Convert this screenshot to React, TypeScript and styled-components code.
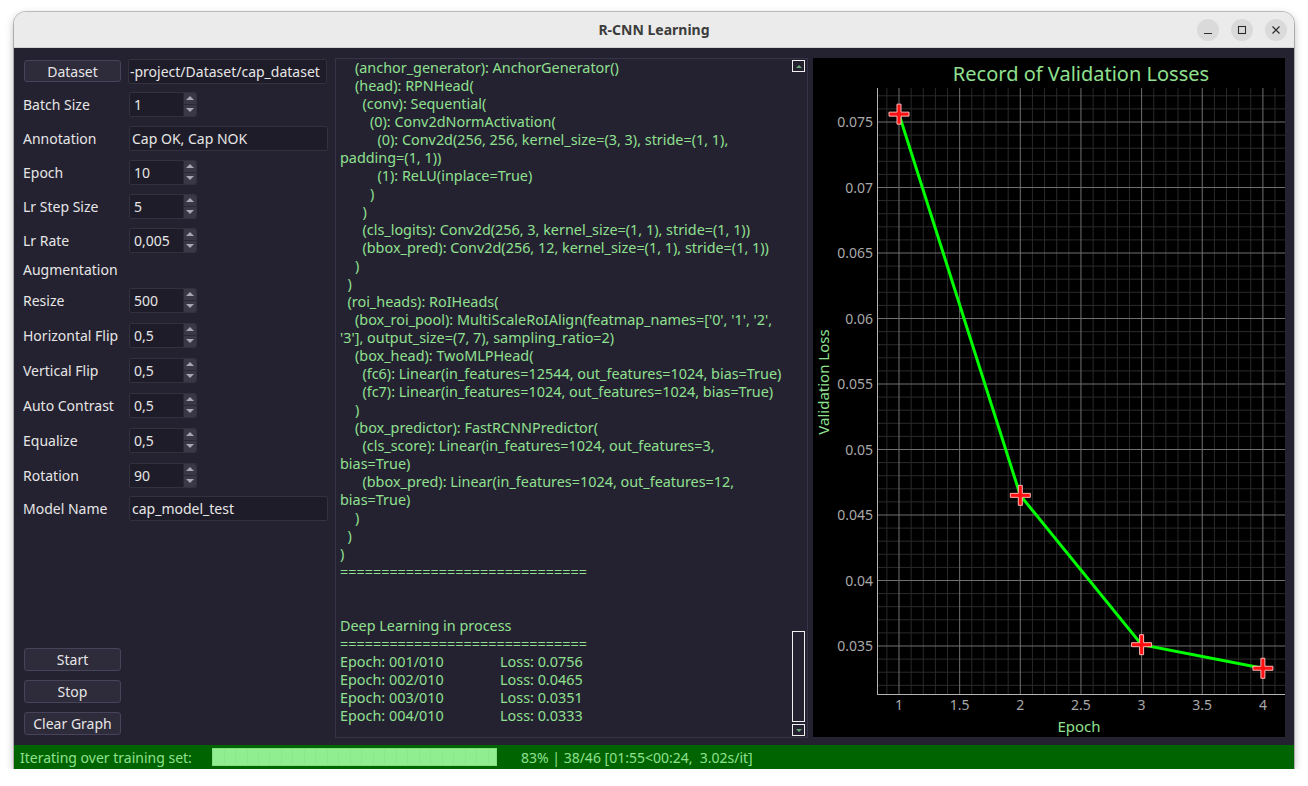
import styled, { createGlobalStyle } from "styled-components";

const GlobalStyle = createGlobalStyle`
  body {
    margin: 0;
    background: #ffffff;
    font-family: "Noto Sans", "DejaVu Sans", sans-serif;
  }
`;

const GREEN = "#90e090";

const Desktop = styled.div`
  padding: 12px 0 0 14px;
`;

const Window = styled.div`
  width: 1280px;
  height: 757px;
  display: flex;
  flex-direction: column;
  border-radius: 12px 12px 0 0;
  overflow: hidden;
  box-shadow: 0 0 0 1px rgba(0, 0, 0, 0.22), 0 3px 9px rgba(0, 0, 0, 0.3);
`;

const TitleBar = styled.div`
  height: 36px;
  flex: none;
  display: grid;
  grid-template-columns: 1fr auto 1fr;
  align-items: center;
  background: #ebebeb;
  border-bottom: 1px solid #d2d2d2;
  box-sizing: border-box;
`;

const Title = styled.div`
  grid-column: 2;
  font-size: 14px;
  font-weight: 700;
  color: #3c3c3c;
`;

const WinButtons = styled.div`
  justify-self: end;
  display: flex;
  gap: 12px;
  padding-right: 7px;
`;

const WinButton = styled.div`
  width: 22px;
  height: 22px;
  border-radius: 50%;
  background: #dadada;
  display: flex;
  align-items: center;
  justify-content: center;
  color: #2e2e2e;
`;

const Body = styled.div`
  flex: 1;
  display: flex;
  gap: 5px;
  padding: 10px 9px 7px 9px;
  background: #242130;
  min-height: 0;
`;

const LeftPanel = styled.div`
  width: 307px;
  flex: none;
  display: flex;
  flex-direction: column;
  justify-content: space-between;
  padding: 1px 0 3px 0;
  color: #e6e6e6;
  font-size: 14px;
`;

const Form = styled.div`
  display: flex;
  flex-direction: column;
`;

const FormGroup = styled.div<{ $gap: number }>`
  display: flex;
  flex-direction: column;
  gap: ${(p) => p.$gap}px;
`;

const Row = styled.div<{ $h?: number }>`
  display: flex;
  align-items: center;
  height: ${(p) => p.$h ?? 26}px;
`;

const Label = styled.span`
  width: 106px;
  flex: none;
  white-space: nowrap;
`;

const SectionLabel = styled.div`
  height: 18px;
  line-height: 18px;
  margin: 8px 0 8px 0;
`;

const PushButton = styled.button`
  width: 97px;
  height: 23px;
  padding: 0;
  background: #2e2b3b;
  border: 1px solid #46435a;
  border-radius: 3px;
  color: #e6e6e6;
  font-family: inherit;
  font-size: 14px;
`;

const DatasetButton = styled(PushButton)`
  margin-left: 1px;
  margin-right: 7px;
  height: 22px;
`;

const LineEdit = styled.div<{ $pad?: number }>`
  width: 199px;
  height: 25px;
  box-sizing: border-box;
  background: #1f1c29;
  border: 1px solid #34313f;
  border-radius: 2px;
  display: flex;
  align-items: center;
  padding-left: ${(p) => p.$pad ?? 2}px;
  white-space: nowrap;
  overflow: hidden;
`;

const Spin = styled.div`
  width: 68px;
  height: 25px;
  box-sizing: border-box;
  background: #1f1c29;
  border: 1px solid #34313f;
  border-radius: 2px;
  display: flex;
`;

const SpinValue = styled.div`
  flex: 1;
  display: flex;
  align-items: center;
  padding-left: 4px;
`;

const SpinArrows = styled.div`
  width: 12px;
  display: flex;
  flex-direction: column;
  background: #3a3747;
  border-left: 1px solid #2a2736;
  border-radius: 0 2px 2px 0;
`;

const Arrow = styled.div<{ $down?: boolean }>`
  flex: 1;
  display: flex;
  align-items: center;
  justify-content: center;
  & + & {
    border-top: 1px solid #2a2736;
  }
  &::after {
    content: "";
    border-left: 4px solid transparent;
    border-right: 4px solid transparent;
    ${(p) =>
      p.$down ? "border-top: 4px solid #a8a6b0;" : "border-bottom: 4px solid #a8a6b0;"}
  }
`;

const ButtonStack = styled.div`
  display: flex;
  flex-direction: column;
  gap: 9px;
  padding-left: 1px;
`;

const Console = styled.div`
  width: 473px;
  flex: none;
  box-sizing: border-box;
  border: 1px solid #37344a;
  display: flex;
  overflow: hidden;
`;

const ConsoleText = styled.div`
  flex: 1;
  padding: 0 0 0 4px;
  color: ${GREEN};
  font-size: 14.4px;
  line-height: 18px;
  overflow: hidden;
`;

const Line = styled.div`
  white-space: pre;
  height: 18px;
`;

const EpochRow = styled.div`
  display: flex;
  height: 18px;
  white-space: pre;
`;

const EpochCol = styled.span`
  width: 160px;
`;

const ScrollBar = styled.div`
  width: 13px;
  margin: 1px 2px 1px 0;
  display: flex;
  flex-direction: column;
  gap: 2px;
`;

const ScrollBtn = styled.div<{ $down?: boolean }>`
  height: 12px;
  box-sizing: border-box;
  border: 1px solid #f0f0f0;
  display: flex;
  align-items: center;
  justify-content: center;
  &::after {
    content: "";
    border-left: 3px solid transparent;
    border-right: 3px solid transparent;
    ${(p) =>
      p.$down ? "border-top: 3px solid #6aa87a;" : "border-bottom: 3px solid #6aa87a;"}
  }
`;

const Track = styled.div`
  flex: 1;
  display: flex;
  flex-direction: column;
  justify-content: flex-end;
`;

const Handle = styled.div`
  height: 91px;
  box-sizing: border-box;
  border: 1px solid #f0f0f0;
`;

const ChartPanel = styled.div`
  width: 472px;
  height: 679px;
  flex: none;
  background: #000000;
`;

const StatusBar = styled.div`
  height: 24px;
  flex: none;
  display: flex;
  align-items: center;
  background: #006400;
  padding-left: 6px;
  color: ${GREEN};
  font-size: 14px;
`;

const StatusLabel = styled.span`
  width: 192px;
  white-space: nowrap;
`;

const Progress = styled.div`
  width: 285px;
  height: 18px;
  box-sizing: border-box;
  border: 1px solid #84de84;
  background: repeating-linear-gradient(
    90deg,
    #90ee90 0px,
    #90ee90 10.5px,
    #8ae78a 10.5px,
    #8ae78a 11.5px
  );
`;

const StatusText = styled.span`
  margin-left: 24px;
  white-space: pre;
`;

const consoleLines = [
  "    (anchor_generator): AnchorGenerator()",
  "    (head): RPNHead(",
  "      (conv): Sequential(",
  "        (0): Conv2dNormActivation(",
  "          (0): Conv2d(256, 256, kernel_size=(3, 3), stride=(1, 1),",
  "padding=(1, 1))",
  "          (1): ReLU(inplace=True)",
  "        )",
  "      )",
  "      (cls_logits): Conv2d(256, 3, kernel_size=(1, 1), stride=(1, 1))",
  "      (bbox_pred): Conv2d(256, 12, kernel_size=(1, 1), stride=(1, 1))",
  "    )",
  "  )",
  "  (roi_heads): RoIHeads(",
  "    (box_roi_pool): MultiScaleRoIAlign(featmap_names=['0', '1', '2',",
  "'3'], output_size=(7, 7), sampling_ratio=2)",
  "    (box_head): TwoMLPHead(",
  "      (fc6): Linear(in_features=12544, out_features=1024, bias=True)",
  "      (fc7): Linear(in_features=1024, out_features=1024, bias=True)",
  "    )",
  "    (box_predictor): FastRCNNPredictor(",
  "      (cls_score): Linear(in_features=1024, out_features=3,",
  "bias=True)",
  "      (bbox_pred): Linear(in_features=1024, out_features=12,",
  "bias=True)",
  "    )",
  "  )",
  ")",
  "==============================",
  "",
  "",
  "Deep Learning in process",
  "==============================",
];

const losses = [0.0756, 0.0465, 0.0351, 0.0333];

const spinRows1 = [
  { kind: "spin", label: "Batch Size", value: "1" },
  { kind: "edit", label: "Annotation", value: "Cap OK, Cap NOK" },
  { kind: "spin", label: "Epoch", value: "10" },
  { kind: "spin", label: "Lr Step Size", value: "5" },
  { kind: "spin", label: "Lr Rate", value: "0,005" },
];

const spinRows2 = [
  { kind: "spin", label: "Resize", value: "500" },
  { kind: "spin", label: "Horizontal Flip", value: "0,5" },
  { kind: "spin", label: "Vertical Flip", value: "0,5" },
  { kind: "spin", label: "Auto Contrast", value: "0,5" },
  { kind: "spin", label: "Equalize", value: "0,5" },
  { kind: "spin", label: "Rotation", value: "90" },
  { kind: "edit", label: "Model Name", value: "cap_model_test", h: 22 },
];

const SpinBox = ({ value }: { value: string }) => (
  <Spin>
    <SpinValue>{value}</SpinValue>
    <SpinArrows>
      <Arrow />
      <Arrow $down />
    </SpinArrows>
  </Spin>
);

const FieldRow = ({ kind, label, value, h }: { kind: string; label: string; value: string; h?: number }) => (
  <Row $h={h}>
    <Label>{label}</Label>
    {kind === "spin" ? <SpinBox value={value} /> : <LineEdit>{value}</LineEdit>}
  </Row>
);

// plot mapping, measured off the reference
const X = (v: number) => 86 + (v - 1) * 121.3;
const Y = (v: number) => 64 + (0.075 - v) * 13100;
const PL = 64;
const PR = 472;
const PT = 30;
const PB = 636;

const Chart = () => {
  const minorX: number[] = [];
  const majorX: number[] = [];
  for (let i = 9; i <= 41; i++) (i % 5 === 0 ? majorX : minorX).push(i / 10);
  const minorY: number[] = [];
  const majorY: number[] = [];
  for (let k = 32; k <= 77; k++) (k % 5 === 0 ? majorY : minorY).push(k / 1000);
  const pts = losses.map((l, i) => [X(i + 1), Y(l)]);
  const cross = (cx: number, cy: number) =>
    `M${cx - 10} ${cy - 2}H${cx - 2}V${cy - 10}H${cx + 2}V${cy - 2}H${cx + 10}V${cy + 2}H${cx + 2}V${cy + 10}H${cx - 2}V${cy + 2}H${cx - 10}Z`;
  return (
    <svg width="472" height="679" viewBox="0 0 472 679">
      <text x="268" y="23" fill={GREEN} fontSize="20" textAnchor="middle" fontFamily="Noto Sans">
        Record of Validation Losses
      </text>
      {minorX.map((v) => (
        <line key={"mx" + v} x1={X(v)} x2={X(v)} y1={PT} y2={PB} stroke="#2a2a2a" />
      ))}
      {minorY.map((v) => (
        <line key={"my" + v} x1={PL} x2={PR} y1={Y(v)} y2={Y(v)} stroke="#2a2a2a" />
      ))}
      {majorX.map((v) => (
        <line key={"Mx" + v} x1={X(v)} x2={X(v)} y1={PT} y2={PB} stroke="#707070" />
      ))}
      {majorY.map((v) => (
        <line key={"My" + v} x1={PL} x2={PR} y1={Y(v)} y2={Y(v)} stroke="#707070" />
      ))}
      <line x1={PL + 0.5} x2={PL + 0.5} y1={PT} y2={PB} stroke="#b4b4b4" />
      <line x1={PL} x2={PR} y1={PB + 0.5} y2={PB + 0.5} stroke="#b4b4b4" />
      {majorY.map((v) => (
        <text key={"ty" + v} x="60" y={Y(v) + 5} fill="#a8a8a8" fontSize="14" textAnchor="end" fontFamily="Noto Sans">
          {String(Number(v.toFixed(3)))}
        </text>
      ))}
      {majorX.filter((v) => v >= 1 && v <= 4).map((v) => (
        <text key={"tx" + v} x={X(v)} y="652" fill="#a8a8a8" fontSize="14" textAnchor="middle" fontFamily="Noto Sans">
          {String(v)}
        </text>
      ))}
      <text x="266" y="674" fill={GREEN} fontSize="15" textAnchor="middle" fontFamily="Noto Sans">
        Epoch
      </text>
      <text
        x="0"
        y="0"
        transform="translate(16 324) rotate(-90)"
        fill={GREEN}
        fontSize="15"
        textAnchor="middle"
        fontFamily="Noto Sans"
      >
        Validation Loss
      </text>
      <polyline points={pts.map((p) => p.join(",")).join(" ")} fill="none" stroke="#00ff00" strokeWidth="3" />
      {pts.map(([cx, cy], i) => (
        <path key={i} d={cross(cx, cy)} fill="#ff1010" stroke="#ffb4b4" strokeWidth="1" />
      ))}
    </svg>
  );
};

const App = () => {
  return (
    <Desktop>
      <GlobalStyle />
      <Window>
        <TitleBar>
          <Title>R-CNN Learning</Title>
          <WinButtons>
            <WinButton>
              <svg width="10" height="10" viewBox="0 0 10 10">
                <path d="M1 8.5H9" stroke="currentColor" strokeWidth="1.2" />
              </svg>
            </WinButton>
            <WinButton>
              <svg width="10" height="10" viewBox="0 0 10 10">
                <rect x="1.5" y="1.5" width="7" height="7" fill="none" stroke="currentColor" strokeWidth="1.1" />
              </svg>
            </WinButton>
            <WinButton>
              <svg width="10" height="10" viewBox="0 0 10 10">
                <path d="M1.5 1.5L8.5 8.5M8.5 1.5L1.5 8.5" stroke="currentColor" strokeWidth="1.2" />
              </svg>
            </WinButton>
          </WinButtons>
        </TitleBar>
        <Body>
          <LeftPanel>
            <Form>
              <FormGroup $gap={8}>
                <Row $h={24}>
                  <DatasetButton>Dataset</DatasetButton>
                  <LineEdit $pad={1}>-project/Dataset/cap_dataset</LineEdit>
                </Row>
                {spinRows1.map((r) => (
                  <FieldRow key={r.label} {...r} />
                ))}
              </FormGroup>
              <SectionLabel>Augmentation</SectionLabel>
              <FormGroup $gap={9}>
                {spinRows2.map((r) => (
                  <FieldRow key={r.label} {...r} />
                ))}
              </FormGroup>
            </Form>
            <ButtonStack>
              <PushButton>Start</PushButton>
              <PushButton>Stop</PushButton>
              <PushButton>Clear Graph</PushButton>
            </ButtonStack>
          </LeftPanel>
          <Console>
            <ConsoleText>
              {consoleLines.map((l, i) => (
                <Line key={i}>{l}</Line>
              ))}
              {losses.map((l, i) => (
                <EpochRow key={i}>
                  <EpochCol>Epoch: 00{i + 1}/010</EpochCol>
                  <span>Loss: {l.toFixed(4)}</span>
                </EpochRow>
              ))}
            </ConsoleText>
            <ScrollBar>
              <ScrollBtn />
              <Track>
                <Handle />
              </Track>
              <ScrollBtn $down />
            </ScrollBar>
          </Console>
          <ChartPanel>
            <Chart />
          </ChartPanel>
        </Body>
        <StatusBar>
          <StatusLabel>Iterating over training set:</StatusLabel>
          <Progress />
          <StatusText>83% | 38/46 [01:55&lt;00:24,  3.02s/it]</StatusText>
        </StatusBar>
      </Window>
    </Desktop>
  );
};

export default App;
